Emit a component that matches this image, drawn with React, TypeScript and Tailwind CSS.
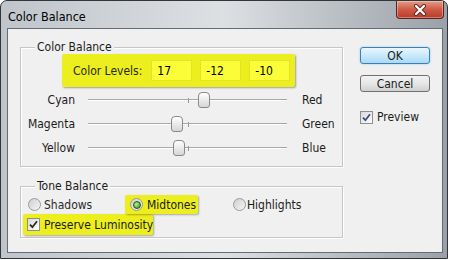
import React from 'react';

const sliders = [
  { left: 'Cyan', right: 'Red', value: 17 },
  { left: 'Magenta', right: 'Green', value: -12 },
  { left: 'Yellow', right: 'Blue', value: -10 },
];

// case à cocher façon Windows 7
const Check = ({ color }: { color: string }) => (
  <span className="w-[13px] h-[13px] shrink-0 border border-[#8e8f8f] bg-linear-to-br from-[#d8d8d8] to-white flex items-center justify-center">
    <svg width="9" height="9" viewBox="0 0 9 9">
      <path d="M1 4.6 L3.4 7.2 L8 1.2" fill="none" stroke={color} strokeWidth="1.8" />
    </svg>
  </span>
);

const Radio = ({ on }: { on?: boolean }) => (
  <span className="w-[13px] h-[13px] shrink-0 rounded-full border border-[#9a9a9a] bg-linear-to-br from-[#cfcfcf] to-[#f6f6f6] flex items-center justify-center">
    {on && (
      <span className="w-[8px] h-[8px] rounded-full border border-[#2c4a22] bg-[radial-gradient(circle_at_35%_35%,#b4f57e,#2a9418)]" />
    )}
  </span>
);

const Slider = ({ value }: { value: number }) => {
  const pos = 100 + value * 0.95;
  return (
    <div className="relative w-[199px] h-[24px] flex items-center">
      <div className="w-full h-[2px] border-t border-[#a9a9a9] bg-white" />
      <div className="absolute left-[100px] top-[10px] w-px h-[5px] bg-[#9a9a9a]" />
      <div
        className="absolute top-[4px] w-[12px] h-[16px] rounded-t-[4px] rounded-b-[3px] border border-[#8a8a8a] bg-linear-to-b from-white to-[#d6d6d6]"
        style={{ left: pos - 6 }}
      />
    </div>
  );
};

const GroupBox = ({ title, className, children }: { title: string; className: string; children: React.ReactNode }) => (
  <div className={`relative border border-[#c6c6c6] shadow-[inset_1px_1px_0_#ffffff,1px_1px_0_#ffffff] ${className}`}>
    <span className="absolute -top-[8px] left-[14px] px-[2px] bg-[#f0f0f0] leading-[14px]">{title}</span>
    {children}
  </div>
);

export default function App() {
  return (
    <div className="w-[450px] h-[260px] bg-white font-['DejaVu_Sans_Condensed','DejaVu_Sans',sans-serif] font-stretch-condensed text-[12px] text-[#1b1b1b]">
      <div className="w-[448px] h-[259px] border border-[#31363b] rounded-t-[7px] bg-linear-to-r from-[#bfc5cb] via-[#dde0e3] to-[#9aa1a8] flex flex-col">
        {/* barre de titre */}
        <div className="h-[27px] flex justify-between items-start">
          <span className="pl-[7px] pt-[7px] text-[12.5px] text-black">Color Balance</span>
          <button className="mr-[3px] w-[48px] h-[18px] rounded-b-[4px] border border-t-0 border-[#5e2318] bg-linear-to-b from-[#e49a8a] via-[#cf5a45] to-[#b83a26] flex items-center justify-center shadow-[inset_0_0_0_1px_rgba(255,255,255,0.35)]">
            <svg width="14" height="12" viewBox="0 0 14 12">
              <path d="M3 2 L11 10 M11 2 L3 10" stroke="#5a2a22" strokeWidth="4" strokeLinecap="round" />
              <path d="M3 2 L11 10 M11 2 L3 10" stroke="white" strokeWidth="2.2" strokeLinecap="round" />
            </svg>
          </button>
        </div>

        {/* zone client */}
        <div className="flex-1 pl-[6px] pr-[4px] pb-[5px] flex">
          <div className="flex-1 border border-[#666c73] bg-[#f0f0f0] flex pt-[18px] pl-[12px]">
            <div className="w-[323px] flex flex-col">
              <GroupBox title="Color Balance" className="h-[120px] pt-[6px]">
                <div className="ml-[41px] w-[233px] h-[33px] bg-[#ecee1e] rounded-[2px] shadow-[1px_1px_2px_rgba(0,0,0,0.35)] flex items-center pl-[11px]">
                  <span className="text-[#2a2a10]">Color Levels:</span>
                  <div className="ml-[9px] flex gap-[8px]">
                    {['17', '-12', '-10'].map((v) => (
                      <span key={v} className="w-[41px] h-[21px] bg-[#fbfd38] border border-[#e2e42a] flex items-center pl-[5px] text-black">
                        {v}
                      </span>
                    ))}
                  </div>
                </div>
                <div className="mt-[1px] flex flex-col">
                  {sliders.map((s) => (
                    <div key={s.left} className="h-[24px] flex items-center">
                      <span className="w-[54px] text-right">{s.left}</span>
                      <div className="ml-[13px]">
                        <Slider value={s.value} />
                      </div>
                      <span className="ml-[15px]">{s.right}</span>
                    </div>
                  ))}
                </div>
              </GroupBox>

              <GroupBox title="Tone Balance" className="mt-[19px] h-[52px] pt-[8px]">
                <div className="h-[19px] flex items-center">
                  <div className="ml-[7px] w-[97px] flex items-center gap-[3px] text-[#2a2a2a]">
                    <Radio />
                    <span>Shadows</span>
                  </div>
                  <div className="w-[73px] h-[19px] bg-[#ecee1e] rounded-[2px] shadow-[1px_1px_2px_rgba(0,0,0,0.3)] flex items-center gap-[4px] pl-[5px]">
                    <Radio on />
                    <span>Midtones</span>
                  </div>
                  <div className="ml-[35px] flex items-center gap-[1px]">
                    <Radio />
                    <span>Highlights</span>
                  </div>
                </div>
                <div className="ml-[2px] w-[130px] h-[21px] bg-[#ecee1e] rounded-[2px] shadow-[1px_1px_2px_rgba(0,0,0,0.3)] flex items-center gap-[4px] pl-[4px]">
                  <Check color="#2b2b18" />
                  <span className="whitespace-nowrap">Preserve Luminosity</span>
                </div>
              </GroupBox>
            </div>

            {/* boutons */}
            <div className="ml-[17px] w-[70px] flex flex-col">
              <button className="h-[17px] rounded-[3px] border border-[#3c7fb1] bg-linear-to-b from-[#eaf6fd] via-[#c9e9fb] to-[#a9daf5] shadow-[0_0_2px_#7ec4ee] flex items-center justify-center">
                OK
              </button>
              <button className="mt-[11px] h-[17px] rounded-[3px] border border-[#707070] bg-linear-to-b from-[#f3f3f3] via-[#e6e6e6] to-[#d0d0d0] flex items-center justify-center">
                Cancel
              </button>
              <div className="mt-[16px] flex items-center gap-[4px]">
                <Check color="#3a4f86" />
                <span>Preview</span>
              </div>
            </div>
          </div>
        </div>
      </div>
    </div>
  );
}
